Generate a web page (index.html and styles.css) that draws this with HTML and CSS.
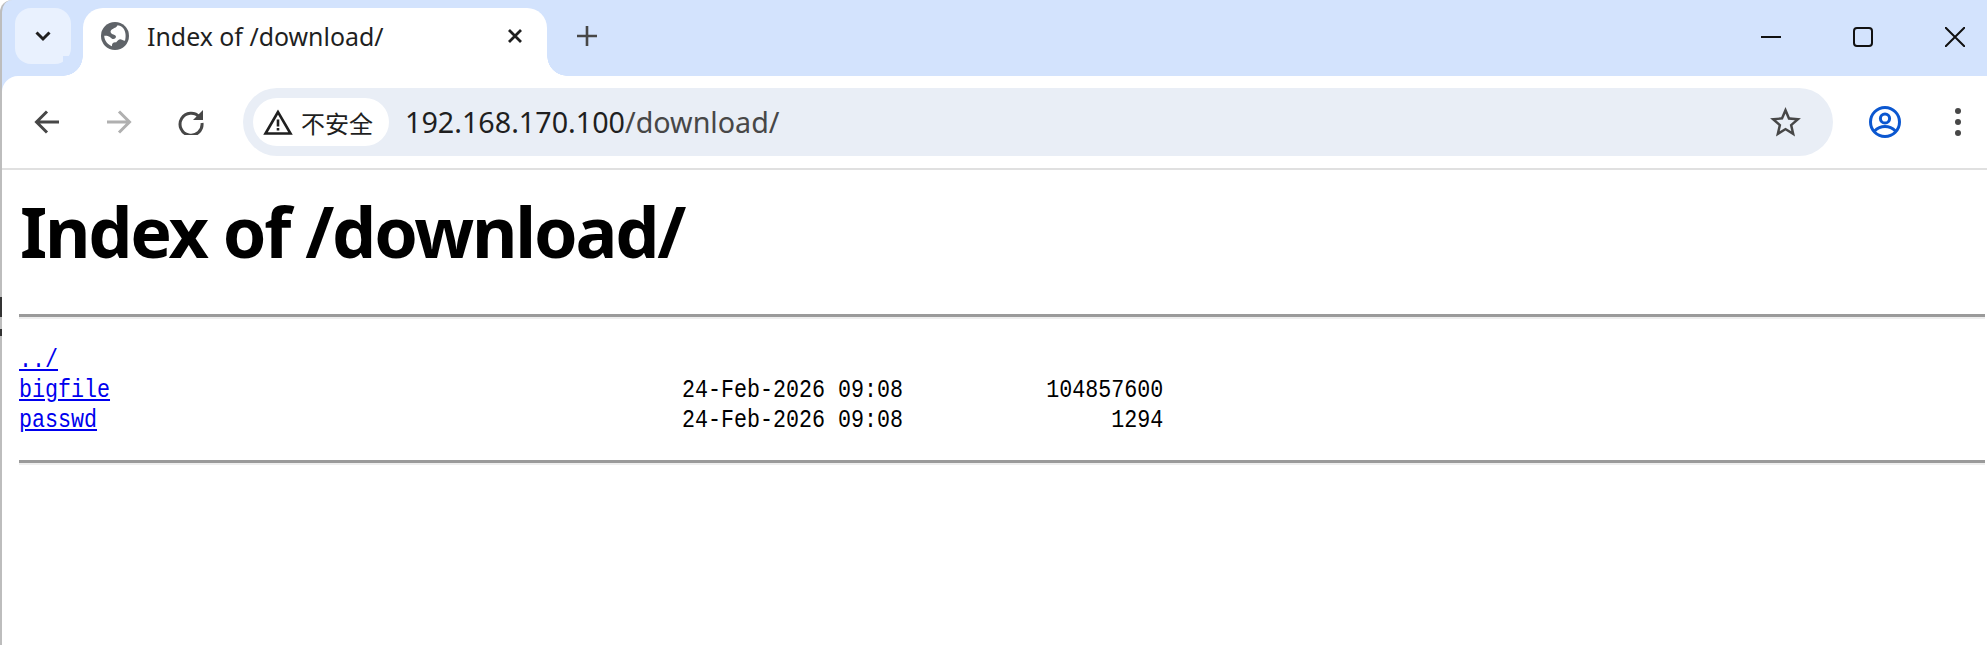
FILE: index.html
```html
<!DOCTYPE html>
<html lang="en">
<head>
<meta charset="utf-8">
<title>Index of /download/</title>
<link rel="stylesheet" href="styles.css">
</head>
<body>
<div class="window">
  <div class="tabstrip">
    <div class="tab-search">
      <svg class="icon-chev" viewBox="0 0 18 12" width="18" height="12"><path d="M2.5 2.5 9 9l6.5-6.5" fill="none" stroke="#1f1f1f" stroke-width="3"/></svg>
    </div>
    <div class="tab">
      <svg class="globe" viewBox="0 0 28 28" width="28" height="28">
        <circle cx="14" cy="14" r="14" fill="#5f6368"/>
        <path d="M16.5 3.2C15.5 6 12.5 5.8 10.5 7.8 8.5 10 10 11.6 12.5 12.6 15 13.6 15.5 14.5 14.5 16 13 17.8 10.5 17 9.5 15.5 8 14 5.5 13.5 3.2 13.8 3.4 18.8 6.6 22.6 11 24.3 10.6 21.5 12.6 20 15 20.4 17 18 18.6 16.4 21 17.8 22 18.4 23 18.7 24 18.8 25.3 14 24.8 8 21 5 19.5 3.9 18 3.4 16.5 3.2z" fill="#fff"/>
      </svg>
      <span class="tab-title">Index of /download/</span>
      <svg class="tab-close" viewBox="0 0 16 16" width="16" height="16"><path d="M2 2l12 12M14 2 2 14" stroke="#1f1f1f" stroke-width="2.8"/></svg>
    </div>
    <svg class="new-tab" viewBox="0 0 20 20" width="20" height="20"><path d="M10 0v20M0 10h20" stroke="#474747" stroke-width="2.6"/></svg>
    <div class="win-controls">
      <svg viewBox="0 0 20 20" width="20" height="20"><path d="M0 10h20" stroke="#111" stroke-width="2"/></svg>
      <svg viewBox="0 0 20 20" width="20" height="20"><rect x="1" y="1" width="18" height="18" rx="3" fill="none" stroke="#111" stroke-width="2"/></svg>
      <svg viewBox="0 0 20 20" width="20" height="20"><path d="M0 0l20 20M20 0 0 20" stroke="#111" stroke-width="2"/></svg>
    </div>
  </div>
  <div class="toolbar">
    <svg class="nav-icon" viewBox="0 0 26 26" width="26" height="26"><path d="M25 13H3M13 2.5 2.5 13 13 23.5" fill="none" stroke="#474747" stroke-width="3"/></svg>
    <svg class="nav-icon" viewBox="0 0 26 26" width="26" height="26"><path d="M1 13h22M13 2.5 23.5 13 13 23.5" fill="none" stroke="#b0b0b0" stroke-width="3"/></svg>
    <svg class="nav-icon" viewBox="0 0 26 26" width="26" height="26"><path d="M21.5 8.2A11 11 0 1 0 24 14" fill="none" stroke="#474747" stroke-width="3"/><path d="M25 1v10H15z" fill="#474747"/></svg>
    <div class="omnibox">
      <div class="chip">
        <svg viewBox="0 0 30 26" width="30" height="26"><path d="M15 3 2.5 24.5h25z" fill="none" stroke="#1f1f1f" stroke-width="2.6"/><path d="M15 10.5v7M15 19v2.6" stroke="#1f1f1f" stroke-width="2.6"/></svg>
        <span class="chip-text">不安全</span>
      </div>
      <div class="url"><span class="host">192.168.170.100</span><span class="path">/download/</span></div>
      <svg class="star" viewBox="0 0 24 24" width="37" height="37"><path d="M22 9.24l-7.19-.62L12 2 9.19 8.63 2 9.24l5.46 4.73L5.82 21 12 17.27 18.18 21l-1.63-7.03L22 9.24zM12 15.4l-3.76 2.27 1-4.28-3.32-2.88 4.38-.38L12 6.1l1.71 4.04 4.38.38-3.32 2.88 1 4.28L12 15.4z" fill="#474747"/></svg>
    </div>
    <svg class="profile" viewBox="0 0 32 32" width="32" height="32">
      <circle cx="16" cy="16" r="14.5" fill="none" stroke="#0b57d0" stroke-width="3"/>
      <circle cx="16" cy="12.5" r="4.6" fill="none" stroke="#0b57d0" stroke-width="3"/>
      <path d="M5.5 25C9 21.5 12 20.5 16 20.5S23 21.5 26.5 25" fill="none" stroke="#0b57d0" stroke-width="3"/>
    </svg>
    <div class="menu"><i></i><i></i><i></i></div>
  </div>
  <main class="page">
    <h1>Index of /download/</h1>
    <hr>
    <pre class="listing"><a href="#">../</a>
<a href="#">bigfile</a>                                            24-Feb-2026 09:08           104857600
<a href="#">passwd</a>                                             24-Feb-2026 09:08                1294
</pre>
    <hr>
  </main>
</div>
<div class="edge edge-a"></div>
<div class="edge edge-b"></div>
</body>
</html>
```
FILE: styles.css
```css
html, body { margin: 0; padding: 0; background: #fff; }
body { position: relative; height: 645px; overflow: hidden; font-family: "Noto Sans", sans-serif; }

.window {
  height: 645px;
  box-sizing: border-box;
  border-left: 2px solid #bdbdbd;
  border-top-left-radius: 12px;
  background: #d3e3fd;
  display: flex;
  flex-direction: column;
  overflow: hidden;
}

.tabstrip {
  height: 76px;
  flex: none;
  display: flex;
  align-items: flex-start;
  padding-top: 8px;
  box-sizing: border-box;
}
.tab-search {
  width: 56px; height: 56px;
  margin-left: 13px;
  border-radius: 16px;
  background: #e9f1fe;
  display: flex; align-items: center; justify-content: center;
}
.tab {
  position: relative;
  width: 464px; height: 68px;
  margin-left: 12px;
  background: #fff;
  border-radius: 20px 20px 0 0;
  display: flex; align-items: center;
  box-sizing: border-box;
  padding: 0 24px 12px 18px;
}
.tab::before, .tab::after {
  content: "";
  position: absolute;
  bottom: 0;
  width: 20px; height: 20px;
}
.tab::before { left: -20px; background: radial-gradient(circle at 0 0, #d3e3fd 19.5px, #fff 20px); }
.tab::after { right: -20px; background: radial-gradient(circle at 100% 0, #d3e3fd 19.5px, #fff 20px); }
.globe { flex: none; }
.tab-title { margin-left: 18px; font-size: 24.9px; color: #1f1f1f; flex: 1; white-space: nowrap; }
.new-tab { margin: 18px 0 0 30px; }

.win-controls {
  margin-left: auto;
  margin-right: 22px;
  margin-top: 19px;
  display: flex;
  gap: 72px;
}

.toolbar {
  height: 94px;
  flex: none;
  box-sizing: border-box;
  background: #fff;
  border-bottom: 2px solid #e0e0e0;
  border-top-left-radius: 16px;
  display: flex;
  align-items: center;
  padding-left: 32px;
}
.nav-icon { flex: none; margin-right: 46px; }
.nav-icon:nth-child(3) { margin-right: 0; }
.omnibox {
  width: 1590px; height: 68px;
  margin-left: 39px;
  border-radius: 34px;
  background: #e9eef6;
  display: flex; align-items: center;
  padding-left: 10px;
  box-sizing: border-box;
}
.chip {
  width: 136px; height: 48px;
  border-radius: 24px;
  background: #fff;
  display: flex; align-items: center;
  padding-left: 10px;
  box-sizing: border-box;
  flex: none;
}
.chip-text {
  margin-left: 8px;
  font-family: "Noto Sans CJK SC", sans-serif;
  font-size: 24px;
  color: #1f1f1f;
}
.url { margin: -2px 0 0 16px; font-size: 28.7px; flex: 1; white-space: nowrap; }
.host { color: #1f1f1f; }
.path { color: #474747; }
.star { flex: none; margin-right: 29px; }
.profile { flex: none; margin-left: 36px; }
.menu {
  margin-left: 54px;
  display: flex; flex-direction: column; gap: 5px;
}
.menu i { display: block; width: 6px; height: 6px; border-radius: 50%; background: #474747; }

.page {
  flex: 1;
  background: #fff;
  padding: 0 2px 0 17px;
}
.page h1 {
  margin: 0;
  padding: 23px 0 0 1px;
  height: 120px;
  box-sizing: border-box;
  font-family: "Noto Sans", sans-serif;
  font-size: 70px;
  letter-spacing: -2.2px;
  line-height: 76px;
  font-weight: 700;
  color: #000;
  white-space: nowrap;
}
.page hr {
  margin: 24px 0 0;
  height: 5px;
  box-sizing: border-box;
  border: 0;
  border-top: 3px solid #9a9a9a;
  border-bottom: 2px solid #eee;
}
.listing {
  margin: 26px 0 0;
  font-family: "Liberation Mono", monospace;
  font-size: 26px;
  line-height: 30px;
  color: #000;
  width: 120%;
  height: 91px;
  transform: scaleX(0.8333);
  transform-origin: 0 0;
}
.listing a { color: #0000ee; }

.edge { position: absolute; left: 0; width: 2px; background: #333; }
.edge-a { top: 297px; height: 20px; }
.edge-b { top: 329px; height: 7px; }
```
